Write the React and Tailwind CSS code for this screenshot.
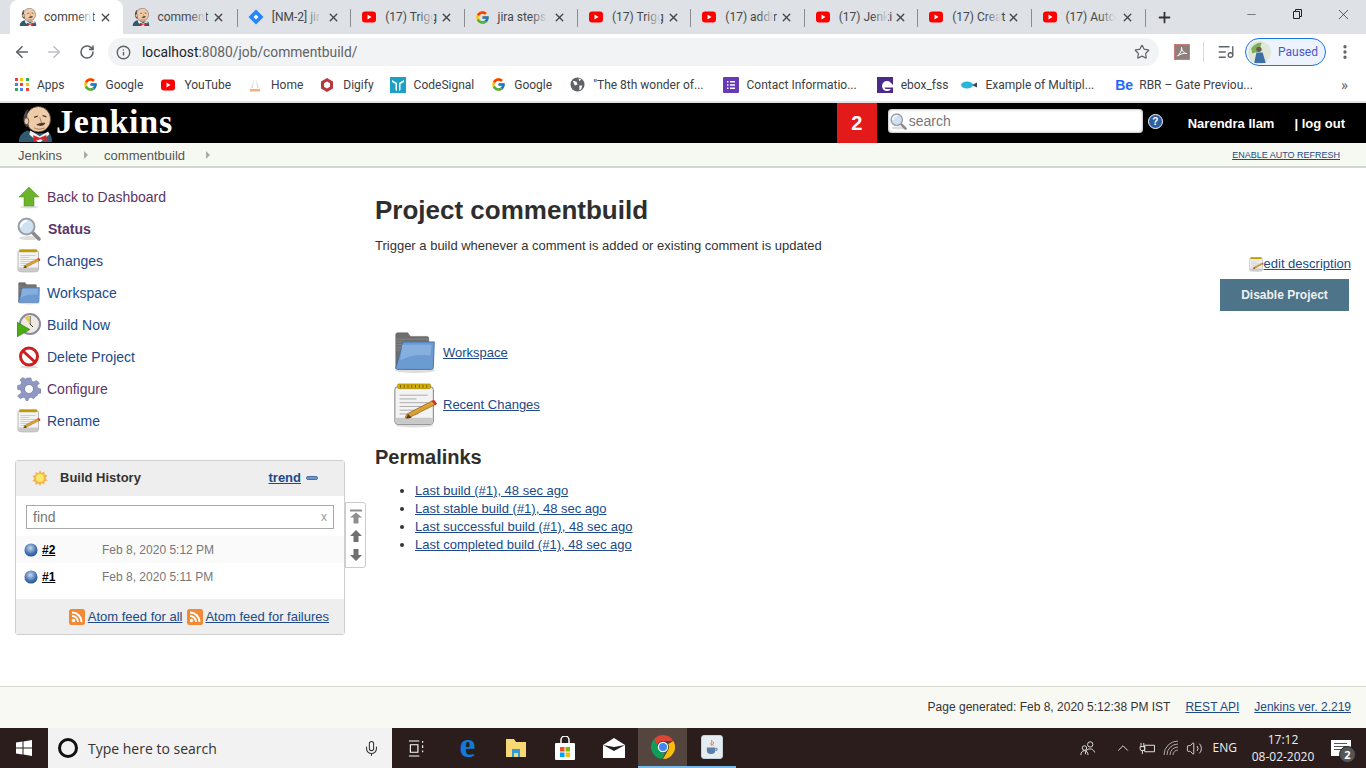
import {
  ArrowLeft,
  ArrowRight,
  RotateCw,
  Info,
  Star,
  Plus,
  X,
  Minus,
  EllipsisVertical,
  ListMusic,
  Mic,
  ChevronUp,
  Volume2,
} from "lucide-react";

const Butler = ({ className }) => (
  <svg viewBox="0 0 37 38" className={className}>
    <path d="M1 38c0-6 3-10 9-12l12 3 11-1c2 3 3 6 3 10z" fill="#2f5a70" />
    <path d="M13 26l10 6 9-5 1 3-9 8h-3l-9-8z" fill="#f2f2f2" />
    <path d="M16 31l7 2.500 7-3 .5 6.500-7-2-7 2.500z" fill="#d5252b" />
    <ellipse cx="21.500" cy="14" rx="13" ry="13.500" fill="#f0cba8" stroke="#3a3230" strokeWidth="0.800" />
    <path d="M9 22C4 17 5 7 11 3c-1 3-2 6-1 9l-1 2c1 3 2 5 3 8z" fill="#4d4847" />
    <ellipse cx="9" cy="16" rx="2.500" ry="3.500" fill="#ecc5a4" stroke="#3a3230" strokeWidth="0.700" />
    <path d="M17 12l4-1.500M26 10l4 1.500" stroke="#3a3230" strokeWidth="1.300" fill="none" />
    <path d="M23 12l2 6" stroke="#a8785a" strokeWidth="1" fill="none" />
    <path d="M19 20c3-2 7-3 10-2-1 2-3 3-5 3z" fill="#4a3a33" />
    <path d="M17 23c3 2 8 2 11 0" stroke="#8a5a44" strokeWidth="0.800" fill="none" />
  </svg>
);

const YouTubeIcon = () => (
  <svg viewBox="0 0 16 16" className="w-4 h-4 shrink-0">
    <rect x="1" y="2.500" width="14" height="11" rx="3" fill="#f00" />
    <path d="M6.500 5.500v5l4-2.500z" fill="#fff" />
  </svg>
);

const GoogleIcon = () => (
  <svg viewBox="0 0 48 48" className="w-[15px] h-[15px] shrink-0">
    <path fill="#FFC107" d="M43.600 20H24v8h11.300C33.700 32.700 29.200 36 24 36c-6.600 0-12-5.400-12-12s5.400-12 12-12c3.100 0 5.800 1.200 8 3l5.700-5.700C34 6 29.300 4 24 4 13 4 4 13 4 24s9 20 20 20 20-9 20-20c0-1.300-.1-2.700-.4-4z" />
    <path fill="#FF3D00" d="M6.300 14.700l6.600 4.800C14.700 15.100 19 12 24 12c3.100 0 5.800 1.200 8 3l5.700-5.700C34 6 29.300 4 24 4 16.300 4 9.700 8.300 6.300 14.700z" />
    <path fill="#4CAF50" d="M24 44c5.200 0 9.900-2 13.400-5.200l-6.200-5.200C29.200 35.100 26.700 36 24 36c-5.200 0-9.600-3.300-11.300-8l-6.500 5C9.500 39.600 16.200 44 24 44z" />
    <path fill="#1976D2" d="M43.600 20H24v8h11.300c-.8 2.200-2.200 4.200-4.100 5.600l6.200 5.200C37 39.200 44 34 44 24c0-1.300-.1-2.700-.4-4z" />
  </svg>
);

const JiraIcon = () => (
  <svg viewBox="0 0 16 16" className="w-4 h-4 shrink-0">
    <path d="M8 0.500L15.500 8 8 15.500 0.500 8z" fill="#2684ff" />
    <path d="M8 5.500L10.500 8 8 10.500 5.500 8z" fill="#fff" />
  </svg>
);

const tabs = [
  { title: "comment", icon: <Butler className="w-[18px] h-[18px] shrink-0 -ml-[2px] -mr-px" />, active: true },
  { title: "comment", icon: <Butler className="w-[18px] h-[18px] shrink-0 -ml-[2px] -mr-px" /> },
  { title: "[NM-2] jir", icon: <JiraIcon /> },
  { title: "(17) Trigg", icon: <YouTubeIcon /> },
  { title: "jira steps", icon: <GoogleIcon /> },
  { title: "(17) Trigg", icon: <YouTubeIcon /> },
  { title: "(17) addir", icon: <YouTubeIcon /> },
  { title: "(17) Jenki", icon: <YouTubeIcon /> },
  { title: "(17) Creat", icon: <YouTubeIcon /> },
  { title: "(17) Auto", icon: <YouTubeIcon /> },
];

const AppsIcon = () => (
  <div className="grid grid-cols-3 gap-[2px] w-[14px] shrink-0">
    {["#ea4335", "#fbbc05", "#34a853", "#4285f4", "#ea4335", "#fbbc05", "#34a853", "#4285f4", "#ea4335"].map((c, i) => (
      <svg key={i} viewBox="0 0 3 3" className="w-[3px] h-[3px]">
        <rect width="3" height="3" fill={c} />
      </svg>
    ))}
  </div>
);

const bookmarks = [
  { label: "Apps", icon: <AppsIcon />, gap: "mr-[18px]" },
  { label: "Google", icon: <GoogleIcon />, gap: "mr-[17px]" },
  { label: "YouTube", icon: <YouTubeIcon />, gap: "mr-[16px]" },
  {
    label: "Home",
    icon: (
      <svg viewBox="0 0 16 16" className="w-4 h-4 shrink-0">
        <path d="M7 2L4 11h2zM9 2l3 9h-2z" fill="#ddd" />
        <rect x="3" y="12" width="10" height="2.500" fill="#f0b27a" />
      </svg>
    ),
    gap: "mr-[16px]",
  },
  {
    label: "Digify",
    icon: (
      <svg viewBox="0 0 16 16" className="w-4 h-4 shrink-0">
        <path d="M8 1l6 3.500v7L8 15l-6-3.500v-7z" fill="#b8383d" />
        <path d="M8 4.500l3 1.800v3.400l-3 1.800-3-1.800V6.300z" fill="#fff" />
      </svg>
    ),
    gap: "mr-[16px]",
  },
  {
    label: "CodeSignal",
    icon: (
      <svg viewBox="0 0 16 16" className="w-4 h-4 shrink-0">
        <rect width="16" height="16" fill="#1ba1c4" />
        <path d="M2 3l5 3v8l-1.500-1V7L2 5zM14 3L9 6v8l1.500-1V7L14 5z" fill="#fff" />
      </svg>
    ),
    gap: "mr-[17px]",
  },
  { label: "Google", icon: <GoogleIcon />, gap: "mr-[18px]" },
  {
    label: "\"The 8th wonder of...",
    icon: (
      <svg viewBox="0 0 16 16" className="w-[15px] h-[15px] shrink-0">
        <circle cx="8" cy="8" r="7.500" fill="#5f6368" />
        <path d="M3 4l4 1 1 3-3 1zM10 9l3 0-1 4-2 1zM9 1.500l3 1-2 2z" fill="#fff" />
      </svg>
    ),
    gap: "mr-[19px]",
  },
  {
    label: "Contact Informatio...",
    icon: (
      <svg viewBox="0 0 16 16" className="w-4 h-4 shrink-0">
        <rect width="16" height="16" rx="1" fill="#673ab7" />
        <path d="M4 4h1.500v1.500H4zM7 4h5v1.500H7zM4 7.200h1.500v1.500H4zM7 7.200h5v1.500H7zM4 10.500h1.500V12H4zM7 10.500h5V12H7z" fill="#fff" />
      </svg>
    ),
    gap: "mr-[20px]",
  },
  {
    label: "ebox_fss",
    icon: (
      <svg viewBox="0 0 16 16" className="w-4 h-4 shrink-0">
        <rect width="16" height="16" fill="#4a2a8a" />
        <path d="M14 6a5 5 0 1 0 0 6H9.500a2 2 0 0 1-2-1.500H16V8z" fill="#fff" />
      </svg>
    ),
    gap: "mr-[13px]",
  },
  {
    label: "Example of Multipl...",
    icon: (
      <svg viewBox="0 0 16 16" className="w-4 h-4 shrink-0">
        <ellipse cx="6" cy="8" rx="6" ry="3.500" fill="#29b6d8" />
        <path d="M11 8l5-2.500v5z" fill="#37474f" />
      </svg>
    ),
    gap: "mr-[21px]",
  },
  {
    label: "RBR – Gate Previou...",
    icon: <span className="w-4 shrink-0 text-[#1769ff] font-bold text-[14px] leading-none font-['Liberation_Sans',sans-serif]">Be</span>,
    gap: "",
  },
];

const FolderIcon = ({ className }) => (
  <svg viewBox="0 0 48 48" className={className}>
    <ellipse cx="24" cy="44" rx="22" ry="3" fill="#ddd" />
    <path d="M3 5a2 2 0 0 1 2-2h11l3 4h18a2 2 0 0 1 2 2v5H12L6 42H3z" fill="#6e6e6e" stroke="#555" strokeWidth="0.500" />
    <path d="M3 10h36M3 13h36M3 16h8M3 19h7M3 22h6" stroke="#8f8f8f" strokeWidth="0.800" />
    <path d="M11 13h34l-1 28a2 2 0 0 1-2 2H5a2 2 0 0 1-2-1z" fill="#6c9bd2" stroke="#3f6ea8" strokeWidth="1" />
    <path d="M10 16h32l-1 12c-12-2-24 0-33 5z" fill="#86afdd" />
  </svg>
);

const NotepadIcon = ({ className }) => (
  <svg viewBox="0 0 48 48" className={className}>
    <ellipse cx="23" cy="45" rx="20" ry="2.500" fill="#ddd" />
    <rect x="2" y="4" width="41" height="40" rx="3" fill="#f3f3f3" stroke="#777" strokeWidth="1" />
    <rect x="2.500" y="37" width="40" height="6.500" rx="2" fill="#c9c9c9" />
    <rect x="5" y="1" width="35" height="5" rx="1" fill="#d8b100" stroke="#8d7400" strokeWidth="0.600" />
    <path d="M8 2v3M12 2v3M16 2v3M20 2v3M24 2v3M28 2v3M32 2v3M36 2v3" stroke="#6e5a00" strokeWidth="1" />
    <path d="M7 13h30M7 17h18M7 21h30M7 25h26M7 29h16M7 33h20" stroke="#a8a8a8" strokeWidth="1" />
    <path d="M15 33l27-14 3 4-26 13-6 1z" fill="#e0a030" stroke="#7a5215" strokeWidth="0.700" />
    <path d="M41 19l3-1 3 4-2 2z" fill="#d82c2c" />
    <path d="M14 38l2-5 4 4z" fill="#5b3a12" />
  </svg>
);

const SearchGlass = ({ className }) => (
  <svg viewBox="0 0 24 24" className={className}>
    <ellipse cx="12" cy="21" rx="10" ry="2" fill="#ddd" />
    <path d="M15 15l7 7" stroke="#8a8a8a" strokeWidth="3.500" strokeLinecap="round" />
    <circle cx="9.500" cy="9.500" r="8" fill="#cfe0f3" stroke="#9a9fa8" strokeWidth="2" />
    <path d="M4 10a6 6 0 0 1 6-6" stroke="#fff" strokeWidth="2" fill="none" />
  </svg>
);

const BuildIcon = ({ className }) => (
  <svg viewBox="0 0 24 24" className={className}>
    <circle cx="13" cy="11" r="10" fill="#eeeae0" stroke="#8a8aa0" strokeWidth="2" />
    <path d="M13 3v8l3 3" stroke="#333" strokeWidth="1" fill="none" />
    <path d="M7 4l6 -1 0 8z" fill="#e8c94a" />
    <path d="M0 9l13 7.500L0 24z" fill="#4caa16" stroke="#2f7a0a" strokeWidth="0.500" />
  </svg>
);

const DeleteIcon = ({ className }) => (
  <svg viewBox="0 0 24 24" className={className}>
    <ellipse cx="12" cy="22" rx="9" ry="1.500" fill="#ddd" />
    <circle cx="12" cy="11.500" r="8.500" fill="#fff" stroke="#cc1f1f" strokeWidth="3" />
    <path d="M6 6l12 11" stroke="#cc1f1f" strokeWidth="3" />
  </svg>
);

const GearIcon = ({ className }) => (
  <svg viewBox="0 0 24 24" className={className}>
    <path
      d="M10 1h4l.6 3 2.400 1 2.600-1.600 2.800 2.800L20 8.800l1 2.400 3 .8v4l-3 .6-1 2.400-1 0-2.400 2.800-2.600-1.600-2.400 1-.6 2.500h-2l-.6-2.500-2.400-1-2.600 1.600-2.800-2.800L4.600 15.400l-1-2.400-3-.6V8.400l3-.6 1-2.400L3 2.800 5.800 0.500l2.600 1.600L10 1z"
      fill="#8f97c4"
      stroke="#6d7399"
      strokeWidth="0.500"
    />
    <circle cx="12" cy="12" r="4.500" fill="#fff" stroke="#6d7399" strokeWidth="0.800" />
  </svg>
);

const UpIcon = ({ className }) => (
  <svg viewBox="0 0 24 24" className={className}>
    <ellipse cx="12" cy="22" rx="9" ry="1.500" fill="#ddd" />
    <path d="M12 2l10 10h-5v9H7v-9H2z" fill="#6bb42a" stroke="#4d9119" strokeWidth="0.500" />
  </svg>
);

const sideLinks = [
  { label: "Back to Dashboard", icon: <UpIcon className="w-6 h-6" />, color: "ml-[6px] text-[#5c3566]" },
  { label: "Status", icon: <SearchGlass className="w-6 h-6" />, color: "ml-[7px] text-[#5c3566] font-bold" },
  { label: "Changes", icon: <NotepadIcon className="w-6 h-6" />, color: "ml-[6px] text-[#204a87]" },
  { label: "Workspace", icon: <FolderIcon className="w-6 h-6" />, color: "ml-[6px] text-[#204a87]" },
  { label: "Build Now", icon: <BuildIcon className="w-6 h-6" />, color: "ml-[6px] text-[#204a87]" },
  { label: "Delete Project", icon: <DeleteIcon className="w-6 h-6" />, color: "ml-[6px] text-[#204a87]" },
  { label: "Configure", icon: <GearIcon className="w-6 h-6" />, color: "ml-[6px] text-[#5c3566]" },
  { label: "Rename", icon: <NotepadIcon className="w-6 h-6" />, color: "ml-[6px] text-[#204a87]" },
];

const Ball = () => (
  <svg viewBox="0 0 16 16" className="w-[14px] h-[14px] shrink-0">
    <defs>
      <radialGradient id="ball" cx="45%" cy="35%" r="70%">
        <stop offset="0%" stopColor="#c8d8ec" />
        <stop offset="60%" stopColor="#4a78b5" />
        <stop offset="100%" stopColor="#1f4a86" />
      </radialGradient>
    </defs>
    <circle cx="8" cy="8" r="7.500" fill="url(#ball)" />
  </svg>
);

const RssIcon = () => (
  <svg viewBox="0 0 16 16" className="w-4 h-4 shrink-0">
    <rect width="16" height="16" rx="2.500" fill="#f08a34" />
    <circle cx="4.500" cy="11.500" r="1.700" fill="#fff" />
    <path d="M3 7a6 6 0 0 1 6 6M3 3.500A9.500 9.500 0 0 1 12.500 13" stroke="#fff" strokeWidth="2" fill="none" />
  </svg>
);

const SunIcon = () => (
  <svg viewBox="0 0 16 16" className="w-4 h-4 shrink-0">
    <path d="M8 0l1.500 3 3-1.500 0 3 3 1-2 2.500 2 2.500-3 1 0 3-3-1.500L8 16l-1.500-2.500-3 1.500 0-3-3-1 2-2.500-2-2.500 3-1 0-3 3 1.500z" fill="#f6b24a" />
    <circle cx="8" cy="8" r="4" fill="#fbe96a" />
  </svg>
);

const permalinks = [
  "Last build (#1), 48 sec ago",
  "Last stable build (#1), 48 sec ago",
  "Last successful build (#1), 48 sec ago",
  "Last completed build (#1), 48 sec ago",
];

const WinButton = ({ children }) => (
  <div className="w-[46px] h-full flex items-center justify-center text-[#222]">{children}</div>
);

const ChromeBar = () => (
  <div className="font-['Roboto',sans-serif] shrink-0">
    <div className="h-[34px] bg-[#dee1e6] flex items-end pl-[10px]">
      {tabs.map((t, i) => (
        <div
          key={i}
          className={`w-[113.4px] h-[34px] relative flex items-center pl-[11px] pr-[10px] gap-2 text-[12px] ${
            t.active ? "bg-white rounded-t-lg text-[#3c4043]" : "text-[#45474a]"
          }`}
        >
          {t.icon}
          <div className="relative w-[49px] -mr-[2px] whitespace-nowrap">
            {t.title}
            <div className={`absolute inset-y-0 right-0 w-4 bg-linear-to-r from-transparent ${t.active ? "to-white" : "to-[#dee1e6]"}`} />
          </div>
          <X size={13} strokeWidth={2.500} className="shrink-0 text-[#45474a]" />
          {!t.active && i !== 1 && <div className="absolute left-0 top-[9px] h-[18px] w-px bg-[#8a8c90]" />}
        </div>
      ))}
      <div className="h-[34px] flex items-center pl-[11px] border-l border-transparent relative">
        <div className="absolute left-0 top-[9px] h-[18px] w-px bg-[#8a8c90]" />
        <Plus size={17} strokeWidth={2.500} className="text-[#333]" />
      </div>
      <div className="flex-1" />
      <div className="h-[28px] self-start flex">
        <WinButton><Minus size={13} strokeWidth={1} /></WinButton>
        <WinButton>
          <svg viewBox="0 0 12 12" className="w-[12px] h-[12px]" fill="none" stroke="#222" strokeWidth="1">
            <path d="M2.500 3.500h6v7h-6zM4.500 3.500v-2h6v7h-2" />
          </svg>
        </WinButton>
        <WinButton><X size={17} strokeWidth={1} /></WinButton>
      </div>
    </div>

    <div className="h-[36px] bg-white flex items-center pl-[13px] pr-[12px]">
      <ArrowLeft size={18} strokeWidth={2.200} className="text-[#5f6368]" />
      <ArrowRight size={18} strokeWidth={2.200} className="text-[#bdc1c6] ml-[14px]" />
      <RotateCw size={16} strokeWidth={2.400} className="text-[#5f6368] ml-[16px]" />
      <div className="ml-[13px] w-[1051px] h-[28px] rounded-full bg-[#f1f3f4] flex items-center pl-[8px] pr-[9px] shrink-0">
        <Info size={15} strokeWidth={2.200} className="text-[#5f6368]" />
        <div className="ml-[11px] text-[13.8px] flex-1">
          <span className="text-[#202124]">localhost</span>
          <span className="text-[#5f6368]">:8080/job/commentbuild/</span>
        </div>
        <Star size={16} strokeWidth={1.800} className="text-[#5f6368]" />
      </div>
      <div className="ml-[15px] w-4 h-4 bg-[#8c7f7c] border border-[#c87f78] flex items-center justify-center shrink-0">
        <svg viewBox="0 0 12 12" className="w-3 h-3" fill="none" stroke="#fff" strokeWidth="1">
          <path d="M1.500 10C4 8 6 4 5.500 1.500 6 5 8 7.500 11 7.500 8 7 4 8 1.500 10z" />
        </svg>
      </div>
      <div className="ml-[13px] w-px h-[20px] bg-[#d5d7da]" />
      <ListMusic size={18} strokeWidth={1.800} className="text-[#5f6368] ml-[13px]" />
      <div className="ml-[10px] w-[81px] h-[28px] rounded-full border border-[#1a73e8] bg-[#edf3fc] flex items-center pl-[2px] shrink-0">
        <svg viewBox="0 0 22 22" className="w-[23px] h-[23px] shrink-0">
          <circle cx="11" cy="11" r="11" fill="#dfe8d6" />
          <path d="M3 7c3-4 8-6 10-5l-3 8-6 2z" fill="#7fae5a" />
          <path d="M8 11h6l3 10H6z" fill="#3f6fa8" />
          <circle cx="10.500" cy="8" r="2.500" fill="#6a5a50" />
        </svg>
        <span className="ml-[7px] text-[12px] text-[#4a56c8]">Paused</span>
      </div>
      <EllipsisVertical size={18} strokeWidth={2.400} className="text-[#5f6368] ml-[10px] shrink-0" />
    </div>

    <div className="h-[31px] bg-white flex items-center pl-[15px] pb-[2px] text-[12px] text-[#3c4043] relative">
      {bookmarks.map((b, i) => (
        <div key={i} className={`flex items-center gap-[8px] whitespace-nowrap ${b.gap}`}>
          {b.icon}
          <span>{b.label}</span>
        </div>
      ))}
      <span className="absolute right-[18px] top-[4px] text-[15px] text-[#5f6368]">»</span>
    </div>
    <div className="h-[2px] bg-[#e2e2e2]" />
  </div>
);

const JenkinsHeader = () => (
  <>
    <div className="h-[40px] bg-black flex items-stretch shrink-0 text-white">
      <Butler className="w-[35px] h-[38px] ml-[18px] mr-[2px] self-end" />
      <div className="ml-[1px] font-['Liberation_Serif',serif] font-bold text-[34px] leading-[36px] tracking-[0.8px] mt-px">Jenkins</div>
      <div className="flex-1" />
      <div className="w-[40px] bg-[#e31a1a] flex items-center justify-center font-bold text-[20px]">2</div>
      <div className="ml-[11px] mt-[6px] w-[255px] h-[24px] rounded-[4px] bg-white flex items-center pl-[2px] shadow-[inset_0_0_3px_#888]">
        <SearchGlass className="w-[17px] h-[17px]" />
        <span className="ml-[2px] text-[14px] text-[#777]">search</span>
      </div>
      <div className="ml-[5px] mt-[11px] w-[15px] h-[15px] rounded-full bg-[#2f5f9e] border border-white flex items-center justify-center text-[10px] font-bold leading-none">?</div>
      <div className="ml-[25px] font-bold text-[13px] leading-[40px] mt-px">Narendra Ilam</div>
      <div className="ml-[20px] mr-[21px] font-bold text-[13px] leading-[40px] mt-px">| log out</div>
    </div>
    <div className="h-[25px] bg-[#f6f9f1] border-b-2 border-[#d3d7cf] flex items-center pl-[18px] pr-[26px] text-[13px] text-[#555] shrink-0">
      <span className="mt-[2px]">Jenkins</span>
      <span className="ml-[22px] mr-[16px] w-0 h-0 border-y-[4px] border-y-transparent border-l-[4px] border-l-[#aaa]" />
      <span className="mt-[2px]">commentbuild</span>
      <span className="ml-[21px] w-0 h-0 border-y-[4px] border-y-transparent border-l-[4px] border-l-[#aaa]" />
      <div className="flex-1" />
      <a className="text-[9px] text-[#204a87] underline mt-[2px]">ENABLE AUTO REFRESH</a>
    </div>
  </>
);

const Sidebar = () => (
  <div className="w-[375px] shrink-0 pt-[13px] pl-[15px]">
    {sideLinks.map((l) => (
      <div key={l.label} className="h-[32px] flex items-center pl-[2px]">
        <div className="w-[24px] shrink-0">{l.icon}</div>
        <span className={`text-[14px] ${l.color}`}>{l.label}</span>
      </div>
    ))}
    <div className="relative mt-[23px] w-[330px] h-[175px] rounded-[3px] border border-[#cfcfcf] flex flex-col text-[#333]">
      <div className="h-[35px] bg-[#eee] flex items-center pl-[16px] pr-[26px] pb-[2px] text-[13px]">
        <SunIcon />
        <span className="ml-[12px] font-bold text-[#333]">Build History</span>
        <div className="flex-1" />
        <a className="font-bold text-[#204a87] underline">trend</a>
        <span className="ml-[5px] w-[12px] h-[4px] rounded-sm bg-[#6f95c9] border border-[#4a6fa8]" />
      </div>
      <div className="flex-1 pt-[9px]">
        <div className="mx-[10px] h-[24px] border border-[#aaa] flex items-center px-[6px] text-[14px] text-[#777]">
          <span className="flex-1">find</span>
          <span className="text-[#999] text-[12px]">x</span>
        </div>
        <div className="mt-[7px] h-[27px] bg-[#fafafa] flex items-center pl-[8px] text-[12px]">
          <Ball />
          <a className="ml-[4px] w-[60px] font-bold text-black underline">#2</a>
          <span className="text-[#777]">Feb 8, 2020 5:12 PM</span>
        </div>
        <div className="h-[27px] flex items-center pl-[8px] text-[12px]">
          <Ball />
          <a className="ml-[4px] w-[60px] font-bold text-black underline">#1</a>
          <span className="text-[#777]">Feb 8, 2020 5:11 PM</span>
        </div>
      </div>
      <div className="h-[35px] bg-[#eee] flex items-center justify-end pr-[15px] pt-[1px] text-[13px] text-[#204a87]">
        <RssIcon />
        <a className="ml-[3px] underline">Atom feed for all</a>
        <span className="ml-[5px]"><RssIcon /></span>
        <a className="ml-[2px] underline">Atom feed for failures</a>
      </div>
      <div className="absolute left-[329px] top-[41px] w-[21px] h-[66px] bg-white border border-[#ccc] rounded-r-[3px] flex flex-col items-center justify-center gap-[5px] text-[#888]">
        <svg viewBox="0 0 12 14" className="w-3 h-[15px]" fill="#8f8f8f"><path d="M0 0h12v2H0zM6 3l6 5H8.500v6h-5V8H0z" /></svg>
        <svg viewBox="0 0 12 14" className="w-3 h-[14px]" fill="#707070"><path d="M6 1l6 6H8.500v6h-5V7H0z" /></svg>
        <svg viewBox="0 0 12 14" className="w-3 h-[14px]" fill="#707070"><path d="M6 13l6-6H8.500V1h-5v6H0z" /></svg>
      </div>
    </div>
  </div>
);

const MainPanel = () => (
  <div className="flex-1 pr-[15px] pt-[27px] text-[#333]">
    <h1 className="text-[26px] font-bold leading-[30px] text-[#2e2e2e]">Project commentbuild</h1>
    <p className="mt-[12px] text-[13px] leading-[18px]">Trigger a build whenever a comment is added or existing comment is updated</p>
    <div className="flex justify-end items-center text-[13px] text-[#204a87] leading-[18px]">
      <NotepadIcon className="w-[15px] h-[15px]" />
      <a className="underline">edit description</a>
    </div>
    <div className="mt-[6px] flex justify-end pr-[2px]">
      <div className="w-[129px] h-[32px] bg-[#4d7489] text-[#f0f0f0] font-bold text-[12px] flex items-center justify-center">Disable Project</div>
    </div>
    <div className="mt-[19px] ml-[18px] flex items-center h-[44px] text-[13px] text-[#204a87]">
      <FolderIcon className="w-[44px] h-[44px]" />
      <a className="ml-[6px] underline mt-[1px]">Workspace</a>
    </div>
    <div className="mt-[7px] ml-[18px] flex items-center h-[48px] text-[13px] text-[#204a87]">
      <NotepadIcon className="w-[45px] h-[45px]" />
      <a className="ml-[5px] underline">Recent Changes</a>
    </div>
    <h2 className="mt-[16px] text-[20px] font-bold leading-[24px] text-[#2e2e2e]">Permalinks</h2>
    <ul className="mt-[13px] ml-[40px] list-disc text-[13px] leading-[18px] text-[#204a87]">
      {permalinks.map((p) => (
        <li key={p} className="marker:text-[#333]">
          <a className="underline">{p}</a>
        </li>
      ))}
    </ul>
  </div>
);

const Footer = () => (
  <div className="h-[42px] bg-[#f9f9f4] border-t border-[#d8d8d0] shrink-0 flex items-center justify-end pr-[15px] pb-[2px] text-[12px] text-[#333]">
    <span>Page generated: Feb 8, 2020 5:12:38 PM IST</span>
    <a className="ml-[15px] text-[#204a87] underline">REST API</a>
    <a className="ml-[15px] text-[#204a87] underline">Jenkins ver. 2.219</a>
  </div>
);

const TaskIcon = ({ children, className = "" }) => (
  <div className={`w-[49px] h-full flex items-center justify-center shrink-0 ${className}`}>{children}</div>
);

const Taskbar = () => (
  <div className="h-[40px] bg-[#2b1d1b] flex items-stretch shrink-0 text-white font-['Open_Sans',sans-serif]">
    <div className="w-[48px] flex items-center justify-center">
      <svg viewBox="0 0 16 16" className="w-[16px] h-[16px]" fill="#fff">
        <path d="M0 2.500L6.500 1.600V7.500H0zM7.500 1.500L16 0V7.500H7.500zM0 8.500H6.500V14.400L0 13.500zM7.500 8.500H16V16L7.500 14.500z" />
      </svg>
    </div>
    <div className="w-[344px] bg-[#f2f2f2] flex items-center pl-[10px] pr-[12px] text-[#333]">
      <span className="w-[20px] h-[20px] rounded-full border-[3px] border-[#111]" />
      <span className="ml-[10px] text-[14px] flex-1">Type here to search</span>
      <Mic size={17} strokeWidth={1.500} className="text-[#333]" />
    </div>
    <TaskIcon>
      <svg viewBox="0 0 18 18" className="w-[17px] h-[17px]" fill="none" stroke="#fff" strokeWidth="1.200">
        <path d="M1 1h11M1 17h11M2.500 5h8v8h-8zM15.500 1v2M15.500 5.500v3M15.500 11v2" />
      </svg>
    </TaskIcon>
    <TaskIcon className="ml-[2px]">
      <span className="text-[#0f7bd8] font-bold text-[36px] leading-[34px] font-['Liberation_Serif',serif] -mt-[6px]">e</span>
    </TaskIcon>
    <TaskIcon className="-ml-[1px]">
      <svg viewBox="0 0 22 20" className="w-[22px] h-[20px]">
        <path d="M1 1h8l2 3h10v15H1z" fill="#f8d775" />
        <path d="M7 11h8v8h-2v-4H9v4H7z" fill="#2e9bd6" />
      </svg>
    </TaskIcon>
    <TaskIcon>
      <svg viewBox="0 0 22 24" className="w-[22px] h-[24px]">
        <path d="M7 7V4a4 4 0 0 1 8 0v3" stroke="#fff" strokeWidth="1.500" fill="none" />
        <rect x="1" y="7" width="20" height="17" rx="1" fill="#fff" />
        <rect x="6" y="11" width="4.500" height="4.500" fill="#f25022" />
        <rect x="11.500" y="11" width="4.500" height="4.500" fill="#7fba00" />
        <rect x="6" y="16.500" width="4.500" height="4.500" fill="#00a4ef" />
        <rect x="11.500" y="16.500" width="4.500" height="4.500" fill="#ffb900" />
      </svg>
    </TaskIcon>
    <TaskIcon>
      <svg viewBox="0 0 22 20" className="w-[22px] h-[20px]">
        <path d="M0 7L11 0l11 7v13H0z" fill="#fff" />
        <path d="M0 7l11 6 11-6-11 2z" fill="#222" />
      </svg>
    </TaskIcon>
    <TaskIcon className="bg-[#54453f] border-b-2 border-[#76b9ed]">
      <svg viewBox="0 0 24 24" className="w-[24px] h-[24px]">
        <path d="M12 0a12 12 0 0 1 10.400 6H12a6 6 0 0 0-5.700 4L2.900 4.300A12 12 0 0 1 12 0z" fill="#db4437" />
        <path d="M22.400 6A12 12 0 0 1 12 24l5.200-9a6 6 0 0 0 0-6z" fill="#fbbc05" />
        <path d="M2.900 4.300L8 13a5 5 0 0 0 6.500 4.500L11 24A12 12 0 0 1 2.900 4.300z" fill="#0f9d58" />
        <circle cx="12" cy="12" r="5.200" fill="#fff" />
        <circle cx="12" cy="12" r="4" fill="#4285f4" />
      </svg>
    </TaskIcon>
    <TaskIcon className="border-b-2 border-[#76b9ed]">
      <div className="w-[22px] h-[24px] rounded-[3px] bg-[#e6edf2] border border-[#c5d0d8] flex items-center justify-center">
        <svg viewBox="0 0 14 18" className="w-[13px] h-[17px]">
          <path d="M7 1c2 2-2 3 0 6M9 3c1 2-2 2 0 4" stroke="#d9622b" strokeWidth="1" fill="none" />
          <path d="M2 9h9v3a4 4 0 0 1-4 4H6a4 4 0 0 1-4-4z" fill="#5a7fa8" />
          <path d="M11 10h2v2h-2" stroke="#5a7fa8" fill="none" />
        </svg>
      </div>
    </TaskIcon>
    <div className="flex-1" />
    <div className="flex items-center pr-[10px] text-[#eee]">
      <svg viewBox="0 0 18 18" className="w-[16px] h-[16px]" fill="none" stroke="#eee" strokeWidth="1">
        <circle cx="11.500" cy="5" r="3" />
        <path d="M6 16c0-4 2-6 5.500-6 2 0 4 1 5 4" />
        <circle cx="5" cy="9" r="2.500" />
        <path d="M1 17c0-3 1.500-5 4-5s4 2 4 5" />
      </svg>
      <ChevronUp size={18} strokeWidth={1.200} className="ml-[18px]" />
      <svg viewBox="0 0 18 14" className="ml-[7px] w-[17px] h-[13px]" fill="none" stroke="#eee" strokeWidth="1">
        <path d="M6 3.500h10.500v7H6zM2 1v4M5 1v4M1 5h5v2a2 2 0 0 1-5 0zM3.500 9v4" />
      </svg>
      <svg viewBox="0 0 16 16" className="ml-[7px] w-[16px] h-[16px]" fill="none" stroke="#aaa" strokeWidth="1">
        <path d="M1 15A14 14 0 0 1 15 1M4 15A11 11 0 0 1 15 4M7 15a8 8 0 0 1 8-8M10 15a5 5 0 0 1 5-5" />
      </svg>
      <Volume2 size={17} strokeWidth={1.200} className="ml-[7px]" />
      <span className="ml-[10px] text-[12px]">ENG</span>
      <div className="ml-[8px] w-[76px] text-center text-[12px] leading-[17px] whitespace-nowrap">
        <div>17:12</div>
        <div>08-02-2020</div>
      </div>
      <div className="relative ml-[10px] w-[20px] h-[16px] bg-white mr-[5px]">
        <div className="absolute left-[3px] top-[3px] w-[13px] h-px bg-[#555]" />
        <div className="absolute left-[3px] top-[6px] w-[13px] h-px bg-[#555]" />
        <div className="absolute left-[3px] top-[9px] w-[9px] h-px bg-[#555]" />
        <div className="absolute left-[8px] top-[6px] w-[17px] h-[17px] rounded-full bg-[#555] border border-[#222] text-[11px] font-bold leading-[15px] text-center text-white">2</div>
      </div>
    </div>
  </div>
);

export default function App() {
  return (
    <div className="w-[1366px] h-[768px] flex flex-col overflow-hidden bg-white font-['Liberation_Sans',Arial,sans-serif]">
      <ChromeBar />
      <JenkinsHeader />
      <div className="flex-1 flex min-h-0">
        <Sidebar />
        <MainPanel />
      </div>
      <Footer />
      <Taskbar />
    </div>
  );
}
